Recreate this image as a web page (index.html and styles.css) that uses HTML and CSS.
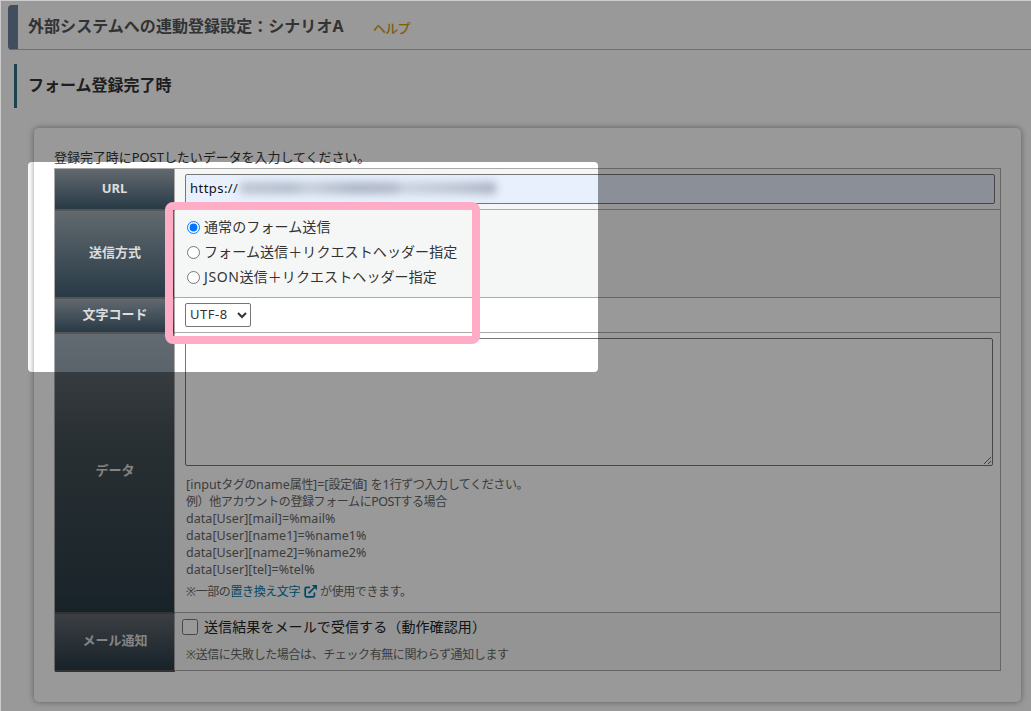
FILE: index.html
```html
<!DOCTYPE html>
<html lang="ja">
<head>
<meta charset="UTF-8">
<meta name="viewport" content="width=device-width, initial-scale=1.0">
<title>外部システムへの連動登録設定</title>
<link rel="stylesheet" href="styles.css">
</head>
<body>
  <header class="page-title">
    <h1>外部システムへの連動登録設定：シナリオA</h1>
    <a class="help">ヘルプ</a>
  </header>

  <h2 class="section-title">フォーム登録完了時</h2>

  <div class="card">
    <p class="lead">登録完了時にPOSTしたいデータを入力してください。</p>
    <table class="settings">
      <tr class="row-url odd">
        <th>URL</th>
        <td><div class="url-input">https://<span class="masked"></span></div></td>
      </tr>
      <tr class="row-method odd">
        <th>送信方式</th>
        <td>
          <label class="option"><input type="radio" name="method" checked>通常のフォーム送信</label>
          <label class="option"><input type="radio" name="method">フォーム送信＋リクエストヘッダー指定</label>
          <label class="option"><input type="radio" name="method"><span class="json">JSON</span>送信＋リクエストヘッダー指定</label>
        </td>
      </tr>
      <tr class="row-charset">
        <th>文字コード</th>
        <td><select class="charset"><option>UTF-8</option></select></td>
      </tr>
      <tr class="row-data">
        <th>データ</th>
        <td>
          <textarea class="data"></textarea>
          <div class="note">
            <div><span class="code">[input</span>タグの<span class="code">name</span>属性<span class="code">]=[</span>設定値<span class="code">] </span>を<span class="code">1</span>行ずつ入力してください。</div>
            <div>例）他アカウントの登録フォームに<span class="code post">POST</span>する場合</div>
            <div class="code">data[User][mail]=%mail%</div>
            <div class="code">data[User][name1]=%name1%</div>
            <div class="code">data[User][name2]=%name2%</div>
            <div class="code">data[User][tel]=%tel%</div>
          </div>
          <div class="note replace">※一部の<a>置き換え文字<svg class="ext" viewBox="0 0 13 13"><path d="M6 2.4H2.4Q1.2 2.4 1.2 3.6V10.6Q1.2 11.8 2.4 11.8H9.2Q10.4 11.8 10.4 10.6V7.6M4.6 8.3L10.4 2.5" fill="none" stroke="currentColor" stroke-width="1.7"/><path d="M7.8 0H13V5.2Z" fill="currentColor"/></svg></a>が使用できます。</div>
        </td>
      </tr>
      <tr class="row-mail odd">
        <th>メール通知</th>
        <td>
          <label class="check"><input type="checkbox"><span>送信結果をメールで受信する（動作確認用）</span></label>
          <div class="note">※送信に失敗した場合は、チェック有無に関わらず通知します</div>
        </td>
      </tr>
    </table>
  </div>

  <!-- dimmed guide layer with the highlighted area -->
  <div class="guide">
    <div class="spotlight"></div>
    <div class="marker"></div>
  </div>
</body>
</html>
```

FILE: styles.css
```css
* {
  box-sizing: border-box;
}

body {
  margin: 0;
  padding: 5px 0 0 8px;
  width: 1031px;
  height: 711px;
  overflow: hidden;
  background: #fff;
  color: #333;
  font-family: "Noto Sans", "Noto Sans CJK JP", sans-serif;
  font-size: 14px;
}

.page-title {
  display: flex;
  height: 45px;
  border-left: 10px solid #6d829b;
  border-bottom: 1px solid #bbb;
  border-radius: 4px 0 0 4px;
  padding-left: 10px;
}

h1, h2 {
  margin: 0;
  font-size: 16px;
  line-height: 42px;
  font-weight: bold;
}

h1 {
  width: 345px;
  color: #555;
  letter-spacing: 0.05px;
}

.help {
  color: #d29b14;
  font-size: 13px;
  font-weight: 500;
  line-height: 46px;
  letter-spacing: -0.8px;
}

.section-title {
  margin: 14px 0 20px 6px;
  padding-left: 11px;
  border-left: 3px solid #2d7084;
  height: 44px;
  color: #333;
}

.card {
  margin-left: 26px;
  width: 987px;
  height: 574px;
  padding: 20px;
  border-radius: 5px;
  box-shadow: 0 0 6px rgba(0, 0, 0, 0.4);
}

.lead {
  margin: 0;
  height: 20px;
  line-height: 18px;
  font-size: 13px;
  letter-spacing: -0.05px;
  white-space: nowrap;
}

.settings {
  width: 947px;
  border: 1px solid #aaa;
  border-bottom: 0;
  border-spacing: 0;
  table-layout: fixed;
}

.settings th {
  width: 120px;
  padding: 0 0 3px;
  border-right: 1px solid #aaa;
  border-bottom: 1px solid #555;
  background: linear-gradient(#62696f, #283a46);
  color: #ddd;
  font-size: 13px;
}

.settings tr + tr th {
  border-top: 1px solid #555;
  padding: 0 0 5px 1px;
}

.settings td {
  padding: 0 5px 0 10px;
  border-bottom: 1px solid #aaa;
  vertical-align: top;
}

.odd td {
  background: #f5f7f6;
}

.row-url { height: 41px; }
.row-method { height: 88px; }
.row-charset { height: 35px; }
.row-data { height: 280px; }
.row-mail { height: 58px; }

.settings .row-data th {
  padding-bottom: 8px;
  background: linear-gradient(#626a72, #5b646a 14%, #475257 35%, #293b45);
}

.settings .row-mail th {
  padding-bottom: 6px;
  box-shadow: 0 1px #555;
}

.url-input {
  display: flex;
  align-items: center;
  height: 30px;
  margin-top: 5px;
  padding: 0 0 2px 4px;
  border: 1px solid #767676;
  border-radius: 2px;
  background: #e8f0fe;
  color: #111;
  font-size: 13px;
  letter-spacing: 0.45px;
}

.masked {
  width: 256px;
  height: 12px;
  margin-left: 2px;
  background: linear-gradient(90deg, #bcc4d2, #b3bcca 20%, #c5cdda 27%, #abb4c3 45%, #b0b8c7 60%, #c8d0dd 64%, #bbc3d1 85%, #a9b1c0);
  filter: blur(4px);
}

.option {
  display: flex;
  align-items: center;
  height: 25px;
  padding-bottom: 2px;
  line-height: 23px;
  letter-spacing: 0.1px;
}

.option:first-child {
  margin-top: 5px;
}

.option input {
  width: 13px;
  height: 13px;
  margin: 1px 4px 0 2px;
}

.json {
  letter-spacing: 0.6px;
}

.charset {
  display: block;
  width: 66px;
  height: 24px;
  margin-top: 5px;
  padding-bottom: 2px;
  border: 1px solid #767676;
  border-radius: 2px;
  background: #fff;
  color: #333;
  font-family: inherit;
  font-size: 13px;
  letter-spacing: 0.5px;
}

.data {
  display: block;
  width: 808px;
  height: 128px;
  margin-top: 5px;
  border: 1px solid #767676;
  border-radius: 2px;
}

.note {
  padding-left: 1px;
  color: #666;
  font-size: 12px;
  line-height: 17px;
  letter-spacing: -0.4px;
  white-space: nowrap;
}

.code {
  font-size: 12.5px;
  letter-spacing: 0.05px;
}

.post {
  letter-spacing: -0.5px;
}

.data + .note {
  margin-top: 10px;
}

.replace {
  margin-top: 5px;
}

.note a {
  color: #0079a8;
}

.ext {
  width: 13px;
  height: 13px;
  margin: 0 3px 0 4px;
  vertical-align: -2px;
}

.check {
  display: flex;
  align-items: center;
  height: 28px;
  margin-left: -3px;
  color: #222;
  letter-spacing: 0.1px;
}

.check span {
  padding-bottom: 2px;
}

.check input {
  width: 16px;
  height: 16px;
  margin: 0 6px 0 0;
}

.check + .note {
  margin-top: 5px;
}

.guide {
  position: absolute;
  top: 0;
  left: 0;
  width: 1031px;
  height: 711px;
  overflow: hidden;
  pointer-events: none;
}

.guide::before {
  content: "";
  position: absolute;
  inset: 0;
  border: solid rgba(255, 255, 255, 0.5);
  border-width: 1px 0 0 1px;
  z-index: 1;
}

.spotlight {
  position: absolute;
  left: 28px;
  top: 162px;
  width: 570px;
  height: 210px;
  border-radius: 4px;
  box-shadow: 0 0 0 1100px rgba(0, 0, 0, 0.4);
}

.marker {
  position: absolute;
  left: 165px;
  top: 202px;
  width: 315px;
  height: 142px;
  border: 8px solid #ffadc6;
  border-radius: 8px;
}
```
